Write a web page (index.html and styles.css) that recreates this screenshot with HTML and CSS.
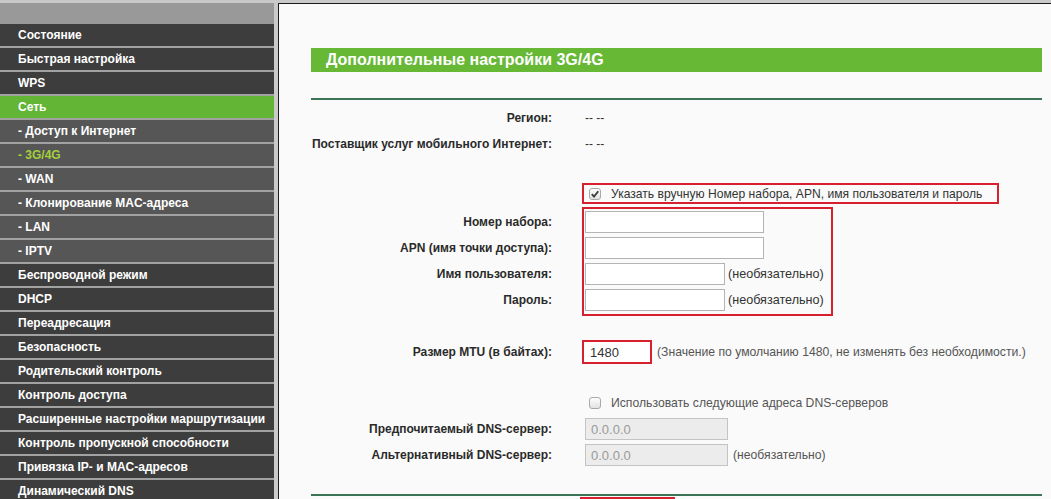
FILE: index.html
```html
<!DOCTYPE html>
<html lang="ru">
<head>
  <meta charset="UTF-8" />
  <title>Дополнительные настройки 3G/4G</title>
  <link rel="stylesheet" href="styles.css">
</head>
<body>
  <div class="topline"></div>
  <div class="page">
    <div class="sidebar">
      <div class="side-cap"></div>
      <div class="menu-item">Состояние</div>
      <div class="menu-item">Быстрая настройка</div>
      <div class="menu-item">WPS</div>
      <div class="menu-item active">Сеть</div>
      <div class="menu-item sub">- Доступ к Интернет</div>
      <div class="menu-item sub current">- 3G/4G</div>
      <div class="menu-item sub">- WAN</div>
      <div class="menu-item sub">- Клонирование MAC-адреса</div>
      <div class="menu-item sub">- LAN</div>
      <div class="menu-item sub">- IPTV</div>
      <div class="menu-item">Беспроводной режим</div>
      <div class="menu-item">DHCP</div>
      <div class="menu-item">Переадресация</div>
      <div class="menu-item">Безопасность</div>
      <div class="menu-item">Родительский контроль</div>
      <div class="menu-item">Контроль доступа</div>
      <div class="menu-item">Расширенные настройки маршрутизации</div>
      <div class="menu-item">Контроль пропускной способности</div>
      <div class="menu-item">Привязка IP- и MAC-адресов</div>
      <div class="menu-item">Динамический DNS</div>
    </div>

    <div class="content">
      <div class="title-bar">Дополнительные настройки 3G/4G</div>
      <div class="hr"></div>

      <div class="form">
        <div class="row"><div class="lbl">Регион:</div><div class="val">-- --</div></div>
        <div class="row"><div class="lbl">Поставщик услуг мобильного Интернет:</div><div class="val">-- --</div></div>

        <div class="row row-check">
          <div class="lbl"></div>
          <div class="redbox check-box">
            <span class="cb"><svg width="10" height="10" viewBox="0 0 10 10"><path d="M1.8 5.2 L4 7.6 L8.3 2.2" fill="none" stroke="#3a3a3a" stroke-width="1.8"/></svg></span>
            <span class="check-text">Указать вручную Номер набора, APN, имя пользователя и пароль</span>
          </div>
        </div>

        <div class="group">
          <div class="group-labels">
            <div class="lbl">Номер набора:</div>
            <div class="lbl">APN (имя точки доступа):</div>
            <div class="lbl">Имя пользователя:</div>
            <div class="lbl">Пароль:</div>
          </div>
          <div class="redbox group-box">
            <div class="field"><input class="inp wide" type="text"></div>
            <div class="field"><input class="inp wide" type="text"></div>
            <div class="field"><input class="inp short" type="text"><span class="opt">(необязательно)</span></div>
            <div class="field"><input class="inp short" type="password"><span class="opt">(необязательно)</span></div>
          </div>
        </div>

        <div class="row row-mtu">
          <div class="lbl">Размер MTU (в байтах):</div>
          <div class="mtu-cell">
            <div class="redbox mtu-box"><input class="mtu-inp" type="text" value="1480"></div>
            <span class="hint">(Значение по умолчанию 1480, не изменять без необходимости.)</span>
          </div>
        </div>

        <div class="row row-dns-check">
          <div class="lbl"></div>
          <div class="plain-check"><span class="cb"></span><span class="hint">Использовать следующие адреса DNS-серверов</span></div>
        </div>
        <div class="row row-dns">
          <div class="lbl">Предпочитаемый DNS-сервер:</div>
          <div class="val"><input class="inp dns" type="text" value="0.0.0.0" disabled></div>
        </div>
        <div class="row row-dns">
          <div class="lbl">Альтернативный DNS-сервер:</div>
          <div class="val"><input class="inp dns" type="text" value="0.0.0.0" disabled><span class="hint opt2">(необязательно)</span></div>
        </div>
      </div>

      <div class="hr hr-bottom"></div>
      <div class="save-row"><div class="redbox save-box"></div></div>
    </div>
  </div>
</body>
</html>
```

FILE: styles.css
```css
* { box-sizing: border-box; margin: 0; padding: 0; }
html, body { height: 100%; overflow: hidden; }
body {
  font-family: "Liberation Sans", Arial, sans-serif;
  font-size: 12px;
  color: #333;
  background: #fafafa;
}
.topline { height: 3px; background: #c9c9c9; }
.page { display: flex; height: 496px; overflow: hidden; }

.sidebar {
  width: 278px; flex: none;
  background: #a2a2a2;
  border-right: 4px solid #cacaca;
}
.side-cap { height: 21px; background: #999; }
.menu-item {
  height: 22px; line-height: 22px; margin-bottom: 2px;
  padding-left: 18px;
  background: #3d3d3d; color: #fff;
  font-weight: bold; font-size: 12px;
  white-space: nowrap;
}
.menu-item.active { background: #63b535; }
.menu-item.sub { background: #565656; }
.menu-item.current { color: #a3d03c; }

.content {
  flex: 1;
  border-left: 1px solid #1c1c1c;
  border-top: 1px solid #1c1c1c;
  padding: 44px 9px 0 32px;
  background: #fafafa;
  overflow: hidden;
}
.title-bar {
  height: 24px; line-height: 24px;
  background: #66b835; color: #fff;
  padding-left: 15px;
  font-size: 16px; font-weight: bold;
}
.hr { height: 2px; background: #3b7456; margin-top: 26px; }

.form { padding-top: 5px; }
.row {
  display: grid; grid-template-columns: 241px auto; column-gap: 30px;
  align-items: center; height: 26px;
}
.lbl { text-align: right; font-weight: bold; color: #2a2a2a; white-space: nowrap; }
.val { padding-left: 3px; display: flex; align-items: center; }

.redbox { border: 2px solid #d6202d; }

.row-check { margin-top: 26px; height: 21px; }
.check-box {
  width: 417px; height: 21px;
  display: flex; align-items: center;
  padding-left: 5px; gap: 10px;
  color: #333;
}
.check-text { font-size: 12.1px; white-space: nowrap; }
.cb {
  width: 12px; height: 12px; flex: none;
  border: 1px solid #a8a8a8; border-radius: 3px;
  background: linear-gradient(#fdfdfd, #e2e2e2);
  display: flex; align-items: center; justify-content: center;
}

.group {
  display: grid; grid-template-columns: 241px auto; column-gap: 30px;
  margin-top: 3px; align-items: start;
}
.group-labels { padding-top: 4px; display: flex; flex-direction: column; gap: 4px; }
.group-labels .lbl { height: 22px; line-height: 22px; }
.group-box {
  width: 251px;
  padding: 2px 0 3px 1px;
  display: flex; flex-direction: column; gap: 4px;
}
.field { display: flex; align-items: center; height: 22px; }
.inp {
  height: 22px; border: 1px solid #b4b4b4; background: #fff;
  font-family: inherit; font-size: 13px; padding: 0 5px; outline: none;
}
.inp.wide { width: 179px; }
.inp.short { width: 140px; }
.opt { margin-left: 3px; font-size: 12.6px; color: #333; }

.row-mtu { margin-top: 24px; height: 24px; }
.mtu-cell { display: flex; align-items: center; }
.mtu-box { width: 70px; height: 24px; padding: 1px; background: #fff; }
.mtu-inp {
  width: 100%; height: 100%; border: none; outline: none; background: #fff;
  font-family: inherit; font-size: 13px; color: #333; padding-left: 5px;
}
.hint { font-size: 12.2px; color: #555; white-space: nowrap; }
.mtu-cell .hint { margin-left: 5px; }

.row-dns-check { margin-top: 28px; height: 22px; }
.plain-check { display: flex; align-items: center; gap: 10px; padding-left: 7px; }
.row-dns-check + .row-dns { margin-top: 2px; }
.inp.dns {
  width: 143px; background: #ececec; border-color: #c4c4c4;
  color: #9a9a9a; font-size: 13px;
}
.opt2 { margin-left: 5px; }

.hr-bottom { margin-top: 26px; }
.save-row { padding: 1px 0 0 269px; }
.save-box { width: 95px; height: 30px; }
```
